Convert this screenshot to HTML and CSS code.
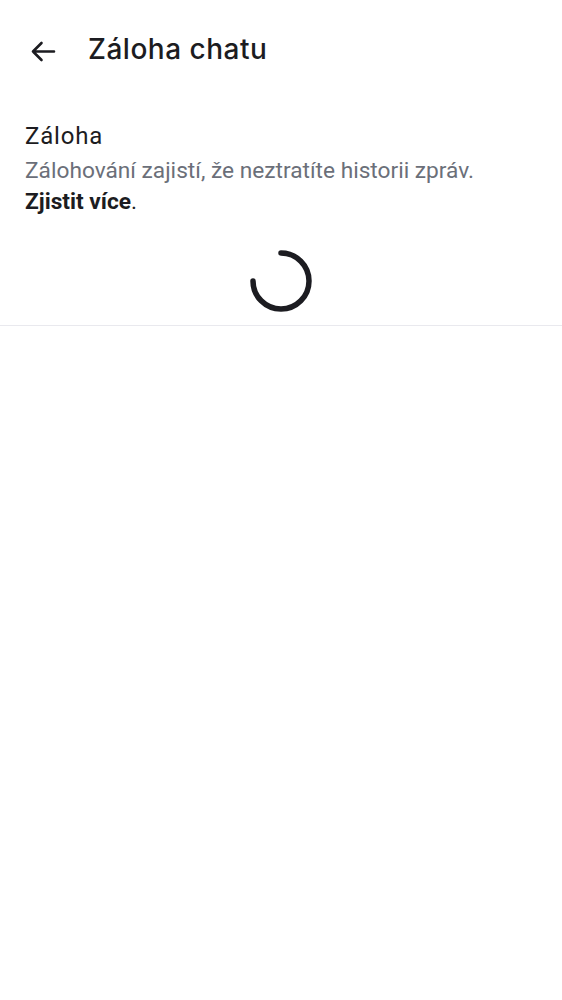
FILE: index.html
```html
<!DOCTYPE html>
<html lang="cs">
<head>
<meta charset="utf-8">
<link rel="stylesheet" href="styles.css">
</head>
<body>
<header class="topbar">
  <button class="back" aria-label="Zpět">
    <svg width="25" height="21" viewBox="0 0 25 21"><path d="M23 10.5H2M10.5 2L2 10.5L10.5 19" fill="none" stroke="#1c1c21" stroke-width="2.6" stroke-linecap="round" stroke-linejoin="round"/></svg>
  </button>
  <h1 class="title">Záloha chatu</h1>
</header>
<section class="backup">
  <h2 class="heading">Záloha</h2>
  <p class="desc">Zálohování zajistí, že neztratíte historii zpráv.<br><span class="more"><b>Zjistit více</b>.</span></p>
  <div class="spinner-wrap">
    <svg class="spinner" width="66" height="66" viewBox="0 0 66 66"><path d="M33 5 A28 28 0 1 1 5 33" fill="none" stroke="#1c1c21" stroke-width="5.5" stroke-linecap="round"/></svg>
  </div>
</section>
</body>
</html>
```
FILE: styles.css
```css
html, body { margin: 0; padding: 0; background: #fff; }
body { font-family: Roboto, "Noto Sans", sans-serif; color: #1c1c21; width: 562px; }
.topbar { display: flex; align-items: center; height: 98px; padding-left: 31px; box-sizing: border-box; }
.back { width: 25px; height: 21px; padding: 0; border: 0; background: none; display: block; margin: 4px 32px 0 0; }
.back svg { display: block; }
.title { margin: 0; font-family: Inter, Roboto, sans-serif; font-size: 28px; line-height: 34px; font-weight: 500; letter-spacing: 0.5px; }
.backup { padding: 22px 25px 0; border-bottom: 1px solid #e9e9ee; }
.heading { margin: 0 0 3px; font-size: 24px; font-weight: 400; line-height: 32px; letter-spacing: 0.8px; }
.desc { margin: 0; font-size: 22.7px; line-height: 31px; color: #6b6f79; }
.more { color: #1c1c21; }
.more b { font-weight: 700; }
.spinner-wrap { display: flex; justify-content: center; padding: 31px 0 11px; }
.spinner { display: block; }
```
